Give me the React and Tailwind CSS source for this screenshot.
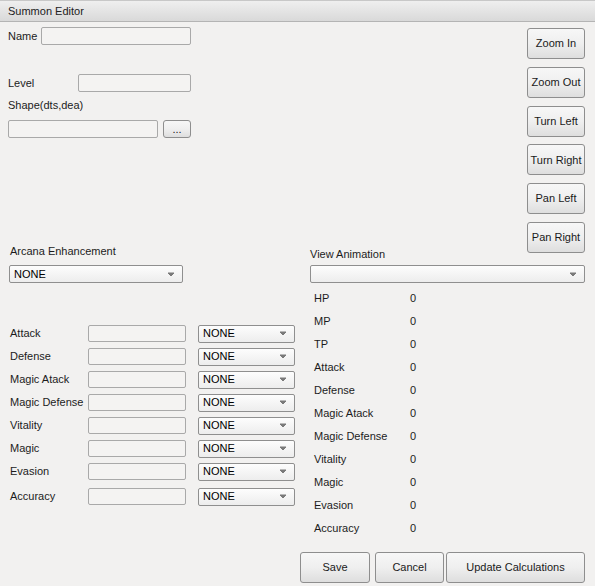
const font = { fontFamily: '"Liberation Sans", Arial, sans-serif' };

function Field({ className = '' }) {
  return (
    <div className={`h-[18px] rounded-[2px] border border-[#a9a9a9] bg-[#f4f3f2] ${className}`} />
  );
}

function Btn({ children, className = '' }) {
  return (
    <button className={`flex items-center justify-center rounded-[3px] border border-[#8e8e8e] bg-gradient-to-b from-[#f7f7f7] via-[#efefef] to-[#dedede] text-[11px] text-[#1a1a1a] ${className}`}>
      {children}
    </button>
  );
}

function Select({ value = '', className = '' }) {
  return (
    <div className={`flex h-[18px] items-center justify-between rounded-[2px] border border-[#8f8f8f] bg-gradient-to-b from-[#fdfdfd] to-[#ededed] pl-[4px] pr-[7px] text-[11px] text-black ${className}`}>
      <span>{value}</span>
      <svg width="8" height="5" viewBox="0 0 8 5">
        <path d="M1 1 L7 1 L4 4 Z" fill="#7a7a7a" stroke="#7a7a7a" strokeLinejoin="round" />
      </svg>
    </div>
  );
}

const leftStats = ['Attack', 'Defense', 'Magic Atack', 'Magic Defense', 'Vitality', 'Magic', 'Evasion', 'Accuracy'];
const rightStats = ['HP', 'MP', 'TP', 'Attack', 'Defense', 'Magic Atack', 'Magic Defense', 'Vitality', 'Magic', 'Evasion', 'Accuracy'];
const viewButtons = ['Zoom In', 'Zoom Out', 'Turn Left', 'Turn Right', 'Pan Left', 'Pan Right'];

export default function App() {
  return (
    <div style={font} className="h-[586px] w-[595px] overflow-hidden bg-[#f2f1f0] text-[11px] text-[#1c1c1c]">
      {/* title bar */}
      <div className="flex h-[22px] items-center border-t border-b border-t-[#c8c8c8] border-b-[#b4b4b4] bg-gradient-to-b from-[#efefef] to-[#d9d9d9] pl-[8px] text-[11px] text-[#222]">
        Summon Editor
      </div>

      {/* top section */}
      <div className="flex h-[221px]">
        <div className="w-[200px] pl-[8px]">
          <div className="mt-[5px] flex items-center">
            <span className="w-[33px]">Name</span>
            <Field className="w-[150px]" />
          </div>
          <div className="mt-[29px] flex items-center">
            <span className="w-[70px] pt-[1px]">Level</span>
            <Field className="w-[113px]" />
          </div>
          <div className="mt-[5px] leading-[16px]">Shape(dts,dea)</div>
          <div className="mt-[7px] flex items-center">
            <Field className="w-[150px]" />
            <Btn className="ml-[5px] h-[18px] w-[28px] leading-none">...</Btn>
          </div>
        </div>
        <div className="ml-auto flex flex-col gap-[7.8px] pr-[10px] pt-[6px]">
          {viewButtons.map((b) => (
            <Btn key={b} className="h-[31px] w-[58px] shrink-0">{b}</Btn>
          ))}
        </div>
      </div>

      {/* middle section */}
      <div className="flex">
        <div className="w-[310px] pl-[9px]">
          <div className="pl-[1px] leading-[16px]">Arcana Enhancement</div>
          <Select value="NONE" className="mt-[6px] w-[174px]" />
          <div className="mt-[39px]">
            {leftStats.map((s, i) => (
              <div key={s} className={`flex h-[23px] items-center ${i === 7 ? 'mt-[2px]' : ''}`}>
                <span className="w-[79px] pl-[1px]">{s}</span>
                <div className="h-[17px] w-[98px] rounded-[2px] border border-[#a9a9a9] bg-[#f4f3f2]" />
                <Select value="NONE" className="ml-[12px] w-[97px]" />
              </div>
            ))}
          </div>
        </div>
        <div className="w-[275px]">
          <div className="pt-[3px] leading-[16px]">View Animation</div>
          <Select className="mt-[3px] w-[275px]" />
          <div className="mt-[4px] pl-[4px]">
            {rightStats.map((s) => (
              <div key={s} className="flex h-[23px] items-center">
                <span className="w-[96px]">{s}</span>
                <span>0</span>
              </div>
            ))}
          </div>
        </div>
      </div>

      {/* bottom buttons */}
      <div className="mt-[12px] flex justify-end pr-[10px]">
        <Btn className="h-[31px] w-[70px]">Save</Btn>
        <Btn className="ml-[5px] h-[31px] w-[69px]">Cancel</Btn>
        <Btn className="ml-[2px] h-[31px] w-[139px]">Update Calculations</Btn>
      </div>
    </div>
  );
}
